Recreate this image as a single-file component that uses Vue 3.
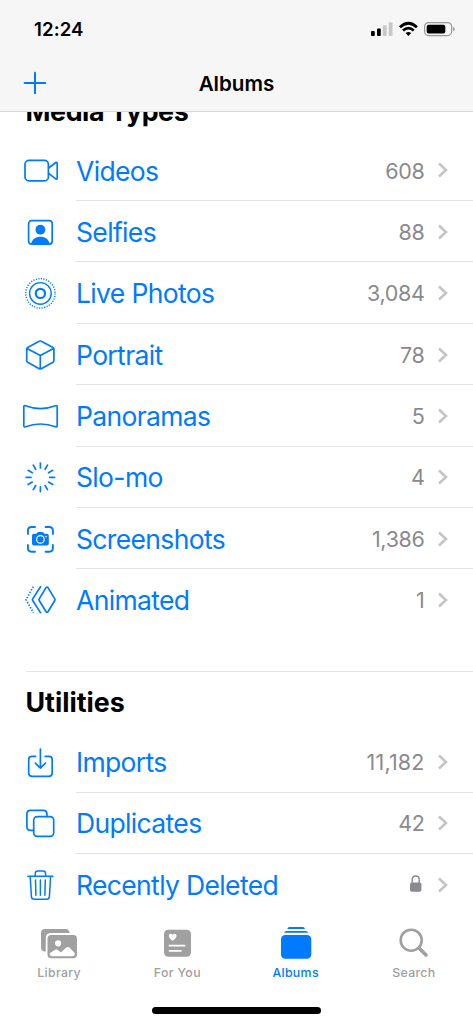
<script setup>
const mediaTypes = [
  { name: 'Videos', count: '608', icon: 'video' },
  { name: 'Selfies', count: '88', icon: 'selfie' },
  { name: 'Live Photos', count: '3,084', icon: 'live' },
  { name: 'Portrait', count: '78', icon: 'cube' },
  { name: 'Panoramas', count: '5', icon: 'pano' },
  { name: 'Slo-mo', count: '4', icon: 'slomo' },
  { name: 'Screenshots', count: '1,386', icon: 'screenshot' },
  { name: 'Animated', count: '1', icon: 'animated' },
]
const utilities = [
  { name: 'Imports', count: '11,182', icon: 'import' },
  { name: 'Duplicates', count: '42', icon: 'duplicate' },
  { name: 'Recently Deleted', count: '', icon: 'trash' },
]
const sections = [
  { title: 'Media Types', key: 'media', rows: mediaTypes },
  { title: 'Utilities', key: 'utilities', rows: utilities },
]
const rays = Array.from({ length: 12 }, (_, i) => i * 30)
const tabs = ['Library', 'For You', 'Albums', 'Search']
</script>

<template>
  <div class="phone">
    <header class="top">
      <div class="status">
        <span class="time">12:24</span>
        <svg class="indicators" width="88" height="20" viewBox="0 0 88 20">
          <rect x="1" y="11" width="3.8" height="5" rx="1" />
          <rect x="7" y="8.5" width="3.8" height="7.5" rx="1" />
          <g fill="#c8c8c8">
            <rect x="12.8" y="5.3" width="3.8" height="10.7" rx="1" />
            <rect x="18.7" y="2.3" width="3.8" height="13.7" rx="1" />
          </g>
          <g fill="none" stroke="#000" stroke-width="2.7">
            <path d="M29.9 7.2Q38.4-.7 46.9 7.2" />
            <path d="M33 10.5Q38.4 5.6 43.8 10.5" />
          </g>
          <path d="M35.6 13.1Q38.4 10.8 41.2 13.1L38.4 16Z" />
          <rect x="54.6" y="2.6" width="27" height="13" rx="4" fill="none" stroke="#999" stroke-width="1.2" />
          <rect x="56.7" y="4.7" width="18.6" height="8.9" rx="2" />
          <path d="M83.2 6.7q3 2.4 0 4.8z" fill="#888" />
        </svg>
      </div>
      <nav class="bar">
        <svg class="plus" width="24" height="24" viewBox="0 0 24 24">
          <path d="M12 1.7V22.3M1.7 12H22.3" />
        </svg>
        <h1>Albums</h1>
      </nav>
    </header>

    <main class="content">
      <section v-for="s in sections" :key="s.key" :class="s.key">
        <h2>{{ s.title }}</h2>
        <div v-for="row in s.rows" :key="row.name" class="row">
          <svg class="icon" width="40" height="40" viewBox="0 0 40 40">
            <template v-if="row.icon === 'video'">
              <rect x="5" y="10.4" width="23.4" height="20.5" rx="4" />
              <path d="M28.6 18L35.8 12.5Q37.2 11.8 37.2 13.5V27.9Q37.2 29.6 35.8 28.9L28.6 23.4" />
            </template>
            <template v-else-if="row.icon === 'selfie'">
              <rect x="8.6" y="8.6" width="23.6" height="23.6" rx="3" />
              <circle class="solid" cx="20.4" cy="17.7" r="4.9" />
              <path class="solid" d="M11 32C12.8 22.2 28 22.2 29.8 32Z" />
            </template>
            <template v-else-if="row.icon === 'live'">
              <circle cx="20.4" cy="20.4" r="14.7" stroke-dasharray="1.2 1.366" stroke-width="1.4" stroke-linecap="butt" />
              <circle cx="20.4" cy="20.4" r="10.8" stroke-width="1.4" />
              <circle cx="20.4" cy="20.4" r="4.6" stroke-width="2.2" />
            </template>
            <template v-else-if="row.icon === 'cube'">
              <path d="M19.3 6.3Q20.3 5.7 21.3 6.3L33 12.6Q33.9 13.1 33.9 14.1V25.8Q33.9 26.8 33 27.3L21.3 33.7Q20.3 34.3 19.3 33.7L7.6 27.3Q6.7 26.8 6.7 25.8V14.1Q6.7 13.1 7.6 12.6ZM7 13.5L20.3 20.5L33.6 13.5M20.3 20.5V34" />
            </template>
            <template v-else-if="row.icon === 'pano'">
              <path d="M5.5 9.8Q20.3 15.5 35.5 9.8Q37.2 9.2 37.2 10.8V29.8Q37.2 31.4 35.5 30.8Q20.3 25.2 5.5 30.8Q3.8 31.4 3.8 29.8V10.8Q3.8 9.2 5.5 9.8Z" />
            </template>
            <template v-else-if="row.icon === 'slomo'">
              <path v-for="a in rays" :key="a" d="M20.4 6.2V11" :transform="`rotate(${a} 20.4 20.4)`" />
            </template>
            <template v-else-if="row.icon === 'screenshot'">
              <g transform="translate(0 -0.6)">
                <path d="M15 8.6H11.6Q7.9 8.6 7.9 12.3V15.5M25.6 8.6H29.2Q32.9 8.6 32.9 12.3V15.5M15 33.4H11.6Q7.9 33.4 7.9 29.7V26.5M25.6 33.4H29.2Q32.9 33.4 32.9 29.7V26.5" stroke-width="1.9" />
                <path class="solid" d="M14 15.4H16.4L17.4 14.1Q17.8 13.7 18.3 13.7H22.5Q23 13.7 23.4 14.1L24.4 15.4H26.8Q28.8 15.4 28.8 17.4V25Q28.8 27 26.8 27H14Q12 27 12 25V17.4Q12 15.4 14 15.4Z" />
                <circle cx="20.4" cy="21" r="3.8" stroke="#fff" stroke-width="1.2" />
                <circle cx="26" cy="18.2" r=".8" fill="#fff" stroke="none" />
              </g>
            </template>
            <template v-else-if="row.icon === 'animated'">
              <g transform="translate(0 -0.6)">
                <path d="M26.2 8Q27 7.2 27.8 8L34.8 19.5Q35.3 20.3 34.8 21.1L27.8 32.6Q27 33.4 26.2 32.6L19.2 21.1Q18.7 20.3 19.2 19.5Z" />
                <path d="M20.5 7.4L12.7 19.5Q12.2 20.3 12.7 21.1L20.5 33.2" />
                <path d="M13.4 7.2L6 20.3L13.4 33.4" stroke-dasharray="1.4 1.55" stroke-linecap="butt" />
              </g>
            </template>
            <template v-else-if="row.icon === 'import'">
              <path d="M15.6 14.4H12Q8.7 14.4 8.7 17.7V31Q8.7 34.3 12 34.3H28.9Q32.2 34.3 32.2 31V17.7Q32.2 14.4 28.9 14.4H25.2M20.4 7.1V26M15.4 21.2L20.4 26.1L25.4 21.2" />
            </template>
            <template v-else-if="row.icon === 'duplicate'">
              <path d="M13.5 27.3H10.5Q6.9 27.3 6.9 23.7V10.9Q6.9 7.3 10.5 7.3H23.3Q26.9 7.3 26.9 10.9V13.6" />
              <rect x="13.7" y="13.6" width="20" height="19.8" rx="3.6" />
            </template>
            <template v-else>
              <path d="M7.9 11.2H32.9M10.2 11.5L11.4 31.6Q11.6 34.2 14.2 34.2H26.6Q29.2 34.2 29.4 31.6L30.6 11.5M15.2 11V8.6Q15.2 6 17.8 6H23Q25.6 6 25.6 8.6V11M15.5 15L15.9 30.3M20.4 15V30.3M25.3 15L24.9 30.3" stroke-width="1.5" />
            </template>
          </svg>
          <div class="line">
            <span class="label">{{ row.name }}</span>
            <span v-if="row.count" class="count" :class="{ wide: row.count.length > 5 }">{{ row.count }}</span>
            <svg v-else class="lock" width="12" height="18" viewBox="0 0 12 18">
              <rect x="0" y="7.5" width="11.4" height="9.3" rx="1.8" fill="#8a8a8e" />
              <path d="M2.2 8V4.6Q2.2 1 5.7 1T9.2 4.6V8" fill="none" stroke="#8a8a8e" stroke-width="1.4" />
            </svg>
            <svg class="chevron" width="12" height="18" viewBox="0 0 12 18">
              <path d="M2 2.5L9 9L2 15.5" />
            </svg>
          </div>
        </div>
      </section>
    </main>

    <footer class="tabs">
      <div v-for="t in tabs" :key="t" class="tab" :class="{ active: t === 'Albums' }">
        <svg width="40" height="36" viewBox="0 0 40 36" fill="currentColor">
          <template v-if="t === 'Library'">
            <path d="M5.3 24.5Q2 24 2 20.8V6Q2 2 6 2H26.7Q30 2 30.6 6H11.5Q6.8 6.2 6.8 11V24.5Z" />
            <path fill-rule="evenodd" d="M12.2 8H34.3Q38 8 38 11.7V27.6Q38 31.3 34.3 31.3H12.2Q8.5 31.3 8.5 27.6V11.7Q8.5 8 12.2 8ZM10.7 26.3Q10.7 29.3 13.2 29.3H33.4Q35.9 29.3 35.9 26.3L30.4 20.6Q28.8 19.2 27.2 20.6L21.8 25.6L18.6 22.7Q17.4 21.7 16.2 22.7ZM22.2 16.3A3.1 3.1 0 1 0 16 16.3A3.1 3.1 0 1 0 22.2 16.3Z" />
          </template>
          <template v-else-if="t === 'For You'">
            <rect x="7" y="2.7" width="27" height="27" rx="4.2" />
            <path d="M15.7 13.8C10.3 10.3 11.5 6.8 13.8 6.8Q15.1 6.8 15.7 8Q16.3 6.8 17.6 6.8C19.9 6.8 21.1 10.3 15.7 13.8Z" fill="#fff" />
            <path d="M12.5 18.7H27.5M12.5 23.8H23.9" stroke="#fff" stroke-width="1.8" stroke-linecap="round" />
          </template>
          <template v-else-if="t === 'Albums'">
            <rect x="5" y="8" width="30.3" height="23.7" rx="4.3" />
            <path d="M8 5.8Q8.7 3.9 10.5 3.9H29.7Q31.5 3.9 32.2 5.8ZM11.3 2Q11.8 0 13.4 0H26.9Q28.5 0 29 2Z" />
          </template>
          <template v-else>
            <circle cx="17.2" cy="13.2" r="10.5" fill="none" stroke="currentColor" stroke-width="2.6" />
            <path d="M25 20.9L32 27.9" stroke="currentColor" stroke-width="3.6" stroke-linecap="round" />
          </template>
        </svg>
        <span>{{ t }}</span>
      </div>
      <div class="home"></div>
    </footer>
  </div>
</template>

<style>
html,
body {
  margin: 0;
  background: #fff;
}
</style>

<style scoped>
.phone {
  width: 473px;
  height: 1024px;
  overflow: hidden;
  display: flex;
  flex-direction: column;
  background: #fff;
  font-family: Inter, 'Liberation Sans', sans-serif;
  color: #000;
}
.top {
  flex: none;
  height: 111px;
  background: #f6f6f6;
  border-bottom: 1px solid #d8d8d8;
}
.status {
  display: flex;
  justify-content: space-between;
  align-items: center;
  height: 58px;
  padding: 0 15.3px 0 34px;
}
.time {
  font-size: 18.6px;
  font-weight: 600;
  letter-spacing: 0.1px;
}
.indicators {
  margin-top: 1.5px;
}
.bar {
  display: grid;
  grid-template-columns: 24px 1fr 24px;
  align-items: center;
  height: 50px;
  padding: 0 22.5px;
}
.plus {
  fill: none;
  stroke: #007aff;
  stroke-width: 2;
  stroke-linecap: round;
}
h1 {
  margin: 0;
  text-align: center;
  font-size: 20.6px;
  font-weight: 600;
}
.content {
  flex: none;
  height: 803px;
  overflow: hidden;
}
h2 {
  margin: 0;
  font-size: 26.8px;
  line-height: 32px;
  font-weight: 700;
}
.media h2 {
  margin: -17.3px 0 13.1px 25.5px;
  letter-spacing: -0.4px;
}
.utilities {
  margin-top: 40.2px;
}
.utilities h2 {
  margin-left: 25.5px;
  padding-top: 14.2px;
  padding-bottom: 13.4px;
  border-top: 1px solid #e3e3e4;
}
.row {
  display: flex;
  align-items: center;
  height: 61.35px;
  padding-left: 20px;
}
.icon {
  flex: none;
  fill: none;
  stroke: #007aff;
  stroke-width: 1.7;
  stroke-linecap: round;
  stroke-linejoin: round;
}
.solid {
  fill: #007aff;
  stroke: none;
}
.line {
  flex: 1;
  box-sizing: border-box;
  height: 100%;
  display: flex;
  align-items: center;
  margin-left: 16px;
  padding-right: 24px;
  border-bottom: 1px solid #e3e3e4;
}
.row:last-child .line {
  border-bottom-color: transparent;
}
.label {
  flex: 1;
  padding-top: 1.2px;
  font-size: 26.5px;
  letter-spacing: -0.65px;
  color: #007aff;
  white-space: nowrap;
}
.count {
  padding-top: 1.2px;
  font-size: 21.5px;
  letter-spacing: -0.35px;
  color: #8a8a8e;
}
.wide {
  letter-spacing: 0.15px;
}
.lock {
  margin-right: 3px;
}
.chevron {
  margin-left: 12.5px;
  margin-top: 1px;
  fill: none;
  stroke: #c4c4c6;
  stroke-width: 2.5;
}
.tabs {
  position: relative;
  flex: 1;
  display: flex;
  padding-top: 11.5px;
}
.tab {
  flex: 1;
  display: flex;
  flex-direction: column;
  align-items: center;
  gap: 2px;
  color: #a0a0a0;
  font-size: 12.3px;
  font-weight: 500;
  letter-spacing: 0.35px;
}
.active {
  color: #007aff;
}
.home {
  position: absolute;
  left: 152px;
  bottom: 10.3px;
  width: 169px;
  height: 6.5px;
  border-radius: 4px;
  background: #000;
}
</style>
